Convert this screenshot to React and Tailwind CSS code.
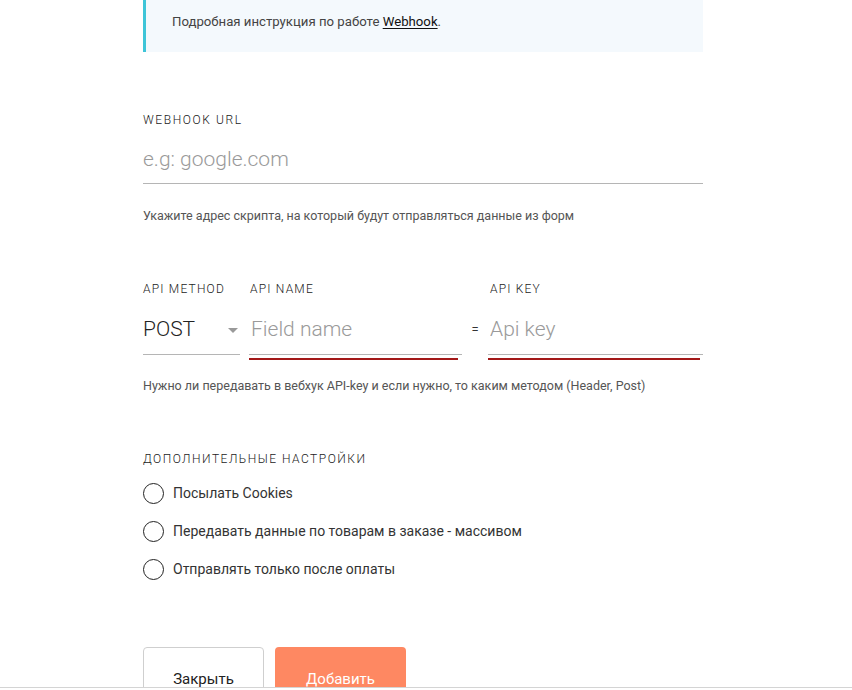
import React from "react";

const font = { fontFamily: "Roboto, 'Noto Sans', sans-serif" };

function Check({ label }) {
  return (
    <label className="flex items-center h-[38px] gap-[9px] cursor-pointer">
      <span className="w-[21px] h-[21px] rounded-full border-[1.5px] border-[#222] bg-white shrink-0" />
      <span className="text-[14px] text-[#333] leading-[20px]">{label}</span>
    </label>
  );
}

export default function App() {
  return (
    <div className="relative w-full h-[690px] overflow-hidden bg-white" style={font}>
      <div className="ml-[143px] w-[560px]">
        <div className="h-[52px] bg-[#f4f9fd] border-l-[3px] border-[#3ec5d8] pl-[26px] pt-[13px]">
          <p className="text-[13.2px] leading-[18px] text-[#444]">
            Подробная инструкция по работе{" "}
            <a className="underline text-[#111] underline-offset-2">Webhook</a>.
          </p>
        </div>

        <div className="mt-[60px] text-[12px] leading-[16px] tracking-[1.6px] font-light text-[#222] uppercase">
          Webhook URL
        </div>
        <div className="mt-[8px] h-[48px] flex items-center border-b border-[#b5b5b5]">
          <input
            className="w-full outline-none bg-transparent text-[21px] font-light text-[#222] placeholder:text-[#9a9a9a]"
            placeholder="e.g: google.com"
          />
        </div>
        <div className="mt-[24px] text-[12.5px] leading-[16px] text-[#555]">
          Укажите адрес скрипта, на который будут отправляться данные из форм
        </div>

        <div className="mt-[57px] flex">
          <div className="w-[97px]">
            <div className="text-[12px] leading-[16px] tracking-[1.2px] font-light text-[#222] uppercase whitespace-nowrap">
              Api method
            </div>
            <div className="mt-[8px] h-[50px] flex items-center justify-between border-b border-[#b5b5b5]">
              <span className="text-[21px] font-light text-[#222]">POST</span>
              <svg width="10" height="6" viewBox="0 0 10 6" className="mr-[2px] mt-[2px]">
                <path d="M0 0 L10 0 L5 5 Z" fill="#999" />
              </svg>
            </div>
          </div>

          <div className="ml-[9px] w-[213px]">
            <div className="pl-[1px] text-[12px] leading-[16px] tracking-[1.2px] font-light text-[#222] uppercase">
              Api name
            </div>
            <div className="mt-[8px] h-[50px] flex items-center border-b border-[#b5b5b5]">
              <input
                className="w-full pl-[2px] outline-none bg-transparent text-[21px] font-light text-[#222] placeholder:text-[#9a9a9a]"
                placeholder="Field name"
              />
            </div>
            <div className="mt-[3px] h-[2px] w-[209px] bg-[#a31818]" />
          </div>

          <div className="w-[26px] flex justify-center pt-[39px] text-[13px] text-[#333]">=</div>

          <div className="w-[215px]">
            <div className="pl-[2px] text-[12px] leading-[16px] tracking-[1.2px] font-light text-[#222] uppercase">
              Api key
            </div>
            <div className="mt-[8px] h-[50px] flex items-center border-b border-[#b5b5b5]">
              <input
                className="w-full pl-[2px] outline-none bg-transparent text-[21px] font-light text-[#222] placeholder:text-[#9a9a9a]"
                placeholder="Api key"
              />
            </div>
            <div className="mt-[3px] h-[2px] w-[212px] bg-[#a31818]" />
          </div>
        </div>

        <div className="mt-[18px] text-[12.5px] leading-[16px] text-[#555]">
          Нужно ли передавать в вебхук API-key и если нужно, то каким методом (Header, Post)
        </div>

        <div className="mt-[57px] text-[12px] leading-[16px] tracking-[1.5px] font-light text-[#222] uppercase">
          Дополнительные настройки
        </div>
        <div className="mt-[7px] flex flex-col">
          <Check label="Посылать Cookies" />
          <Check label="Передавать данные по товарам в заказе - массивом" />
          <Check label="Отправлять только после оплаты" />
        </div>

        <div className="mt-[59px] flex gap-[11px]">
          <button className="w-[121px] h-[56px] rounded-[4px] border border-[#cfcfcf] bg-white text-[15px] text-[#222] pt-[8px]">
            Закрыть
          </button>
          <button className="w-[131px] h-[56px] rounded-[4px] bg-[#fe8862] text-[15px] text-white pt-[8px]">
            Добавить
          </button>
        </div>
      </div>

      <div className="absolute left-0 right-0 bottom-0 h-[3px] bg-white border-t border-[#d4d4d4]" />
    </div>
  );
}
